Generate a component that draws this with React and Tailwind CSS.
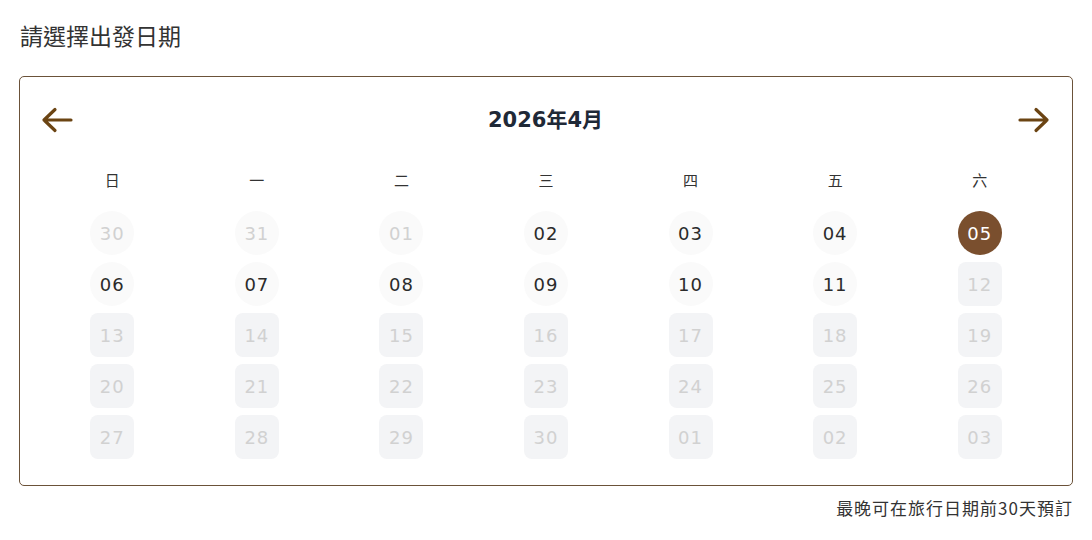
const weekdays = ["日", "一", "二", "三", "四", "五", "六"];

// kind: past | open | selected | locked
const days = [
  ["30", "past"], ["31", "past"], ["01", "past"], ["02", "open"], ["03", "open"], ["04", "open"], ["05", "selected"],
  ["06", "open"], ["07", "open"], ["08", "open"], ["09", "open"], ["10", "open"], ["11", "open"], ["12", "locked"],
  ["13", "locked"], ["14", "locked"], ["15", "locked"], ["16", "locked"], ["17", "locked"], ["18", "locked"], ["19", "locked"],
  ["20", "locked"], ["21", "locked"], ["22", "locked"], ["23", "locked"], ["24", "locked"], ["25", "locked"], ["26", "locked"],
  ["27", "locked"], ["28", "locked"], ["29", "locked"], ["30", "locked"], ["01", "locked"], ["02", "locked"], ["03", "locked"],
];

const dayStyles = {
  past: "rounded-full bg-[#fafafa] text-[#d1d1d1]",
  open: "rounded-full bg-[#fafafa] text-[#2b2b2b]",
  selected: "rounded-full bg-[#7a4f2e] text-white",
  locked: "rounded-lg bg-[#f3f4f6] text-[#d1d1d1]",
};

function Arrow({ flip }) {
  return (
    <svg
      width="32"
      height="26"
      viewBox="0 0 32 26"
      fill="none"
      stroke="#6b4413"
      strokeWidth="3.2"
      strokeLinecap="round"
      strokeLinejoin="round"
      className={flip ? "-scale-x-100" : ""}
    >
      <path d="M3 13H30M14 2.5L3 13L14 23.5" />
    </svg>
  );
}

export default function App() {
  return (
    <div className="bg-white px-[19px] pt-[19px] font-['Noto_Sans_CJK_TC',sans-serif] text-[#333]">
      <h2 className="pl-px text-[23px] leading-[32px] text-[#333]">請選擇出發日期</h2>

      <div className="mt-[25px] rounded-[5px] border border-[#6b5239] px-5 pt-5 pb-[26px]">
        {/* Month header */}
        <div className="flex h-[46px] items-center justify-between">
          <div className="ml-px">
            <Arrow />
          </div>
          <span className="pt-[2px] font-['DejaVu_Sans','Noto_Sans_CJK_TC',sans-serif] text-[21px] font-bold text-[#1f2937]">
            2026年4月
          </span>
          <div className="mr-[2px]">
            <Arrow flip />
          </div>
        </div>

        {/* Weekdays */}
        <div className="mt-[27px] grid grid-cols-7">
          {weekdays.map((w) => (
            <div key={w} className="text-center text-[15px] leading-5 text-[#333]">
              {w}
            </div>
          ))}
        </div>

        {/* Days */}
        <div className="mt-[21px] grid grid-cols-7 gap-y-[7px]">
          {days.map(([d, kind], i) => (
            <div key={i} className="flex justify-center">
              <span
                className={`flex h-[44px] w-[44px] items-center justify-center font-['DejaVu_Sans',sans-serif] text-[18px] tracking-[1px] ${dayStyles[kind]}`}
              >
                {d}
              </span>
            </div>
          ))}
        </div>
      </div>

      <p className="mt-[10px] text-right text-[17px] leading-6 tracking-[1px] text-[#333]">
        最晚可在旅行日期前30天預訂
      </p>
    </div>
  );
}
